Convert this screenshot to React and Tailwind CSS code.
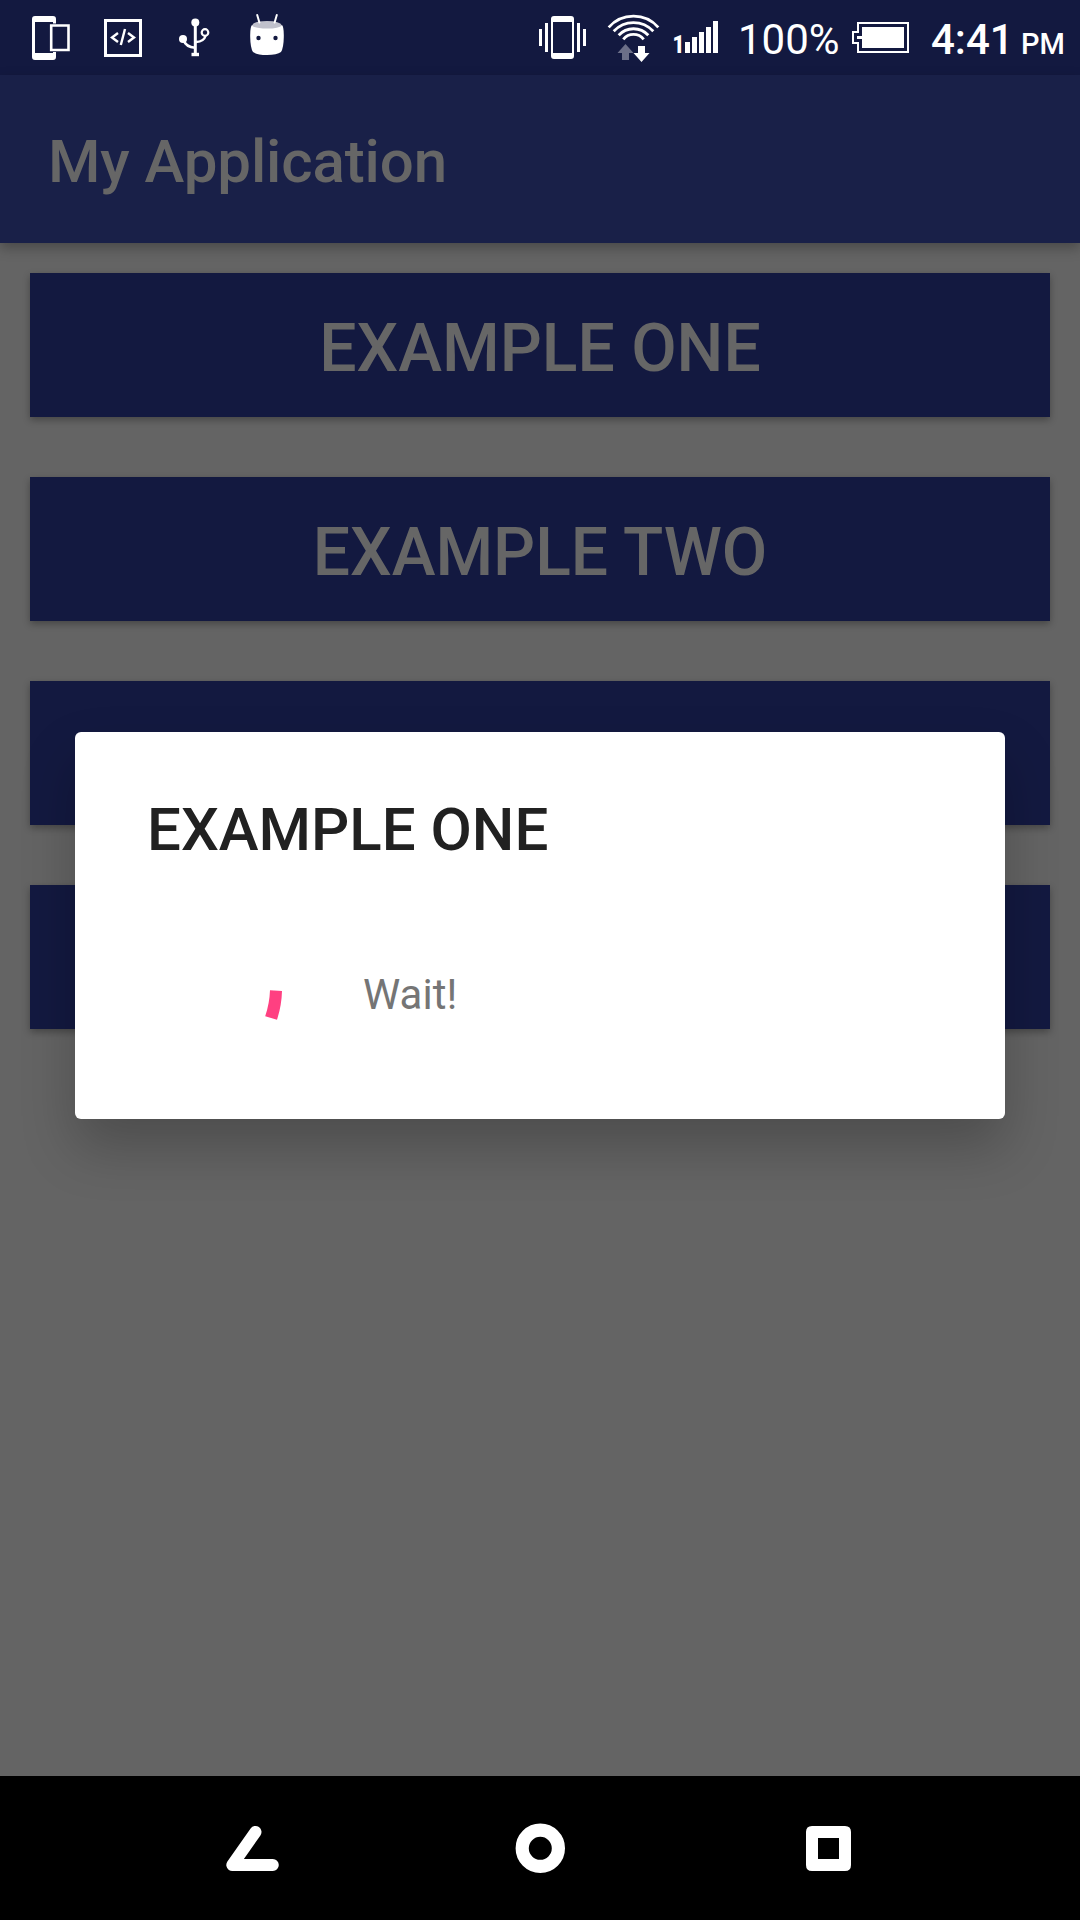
const EXAMPLES = ["Example One", "Example Two", "", ""];

function PhoneTabletIcon() {
  return (
    <svg className="ml-8 shrink-0" width="38" height="75" viewBox="32 0 38 75" fill="none">
      <path d="M35 16H53Q56 16 56 19V57Q56 60 53 60H35Q32 60 32 57V19Q32 16 35 16ZM35 22V53H53V22Z" fill="#fff" fillRule="evenodd" />
      <path d="M49 23.5H70V52H49Z" fill="#131940" />
      <path d="M51.2 25.5H68.5V50H51.2Z" stroke="#fff" strokeWidth="2.6" />
    </svg>
  );
}

function CodeIcon() {
  return (
    <svg className="ml-[34px] shrink-0" width="38" height="75" viewBox="104 0 38 75" fill="none" stroke="#fff">
      <rect x="105.5" y="20.5" width="35" height="35" strokeWidth="3" />
      <path d="M118 33L112 37.5L118 42M128 33L134 37.5L128 42" strokeWidth="2.4" />
      <path d="M125 29L120.800 45" strokeWidth="2.4" />
    </svg>
  );
}

function UsbIcon() {
  return (
    <svg className="ml-[37px] shrink-0" width="31" height="75" viewBox="179 0 31 75" fill="none" stroke="#fff">
      <path d="M195.300 22V54" strokeWidth="3" />
      <path d="M191.500 54.500H199" strokeWidth="3.400" />
      <path d="M183 39Q186 47.500 195 47.700M205.500 36Q204 41.500 196 42" strokeWidth="2.400" />
      <circle cx="195.300" cy="22.600" r="4" fill="#fff" stroke="none" />
      <circle cx="183" cy="39" r="4" fill="#fff" stroke="none" />
      <circle cx="205" cy="32.500" r="3.300" strokeWidth="2.2" />
    </svg>
  );
}

function AndroidIcon() {
  return (
    <svg className="ml-10 shrink-0" width="34" height="75" viewBox="250 0 34 75" fill="none">
      <path d="M252 25Q267 31 282 25Q284 27 283.800 37Q283.600 48 281 52Q277 55 267 55Q257 55 253 52Q250.400 48 250.200 37Q250 27 252 25Z" fill="#fff" />
      <path d="M252 25.500Q254 21 267 21Q280 21 282 25.500Q279 28.600 267 28.600Q255 28.600 252 25.500Z" fill="#c0c1cc" />
      <path d="M257.200 15L259.400 22.500M276.800 15L274.600 22.500" stroke="#fff" strokeWidth="2" strokeLinecap="round" />
      <circle cx="258.500" cy="38" r="2.200" fill="#131940" />
      <circle cx="275.500" cy="38" r="2.200" fill="#131940" />
    </svg>
  );
}

function VibrateIcon() {
  return (
    <svg className="ml-[255px] shrink-0" width="47" height="75" viewBox="539 0 47 75" fill="#fff">
      <path d="M554 16H571Q574 16 574 19V56Q574 59 571 59H554Q551 59 551 56V19Q551 16 554 16ZM553 22V53H572V22Z" fillRule="evenodd" />
      <path d="M545 23H548V52H545ZM539 29H542V46H539ZM577 23H580V52H577ZM583 29H586V46H583Z" />
    </svg>
  );
}

function WifiIcon() {
  return (
    <svg className="ml-[21px] shrink-0" width="53" height="75" viewBox="607 0 53 75" fill="none">
      <g stroke="#fff" strokeWidth="2.800">
        <path d="M608.700 27.300A33 33 0 0 1 658.300 27.300" />
        <path d="M613.700 31.300A27 27 0 0 1 653.300 31.300" />
        <path d="M618.700 35.300A20 20 0 0 1 648.300 35.300" />
        <path d="M623.300 39.300A13 13 0 0 1 643.700 39.300" />
      </g>
      <path d="M625.500 44L633.500 53H629V60H622V53H617.500Z" fill="#6c6f88" />
      <path d="M638 46H645V53H649.500L641.500 62L633.500 53H638Z" fill="#fff" />
    </svg>
  );
}

function SignalIcon() {
  return (
    <svg className="ml-3 shrink-0" width="46" height="75" viewBox="672 0 46 75" fill="#fff">
      <text x="672.500" y="53" fontFamily="Roboto" fontWeight="900" fontSize="26.500" textLength="12" lengthAdjust="spacingAndGlyphs">1</text>
      <path d="M685 42H690V53H685ZM692 37H697V53H692ZM699 32H704V53H699ZM706 27H711V53H706ZM713 21H718V53H713Z" />
    </svg>
  );
}

function BatteryIcon() {
  return (
    <svg className="ml-[13px] shrink-0" width="57" height="75" viewBox="852 0 57 75" fill="none">
      <path d="M858 23H908V52H858V43H853V32H858Z" stroke="#fff" strokeWidth="2" />
      <path d="M862 27H904V48H862V39H857V36H862Z" fill="#fff" />
    </svg>
  );
}

function StatusBar() {
  return (
    <div className="flex h-[75px] items-center bg-[#131940] whitespace-nowrap text-white">
      <PhoneTabletIcon />
      <CodeIcon />
      <UsbIcon />
      <AndroidIcon />
      <VibrateIcon />
      <WifiIcon />
      <SignalIcon />
      <div className="ml-5 w-[101px] pt-[5px] text-[42px] leading-none">100%</div>
      <BatteryIcon />
      <div className="ml-[22px] flex items-baseline pt-[5px] leading-none font-medium">
        <span className="w-[90px] text-[42px]">4:41</span>
        <span className="text-[29px]">PM</span>
      </div>
    </div>
  );
}

function ProgressDialog() {
  return (
    <div className="absolute top-[732px] left-[75px] flex h-[387px] w-[930px] flex-col rounded-md bg-white px-[72px] pt-[63px] shadow-[0_28px_54px_rgba(0,0,0,0.23)]">
      <h2 className="text-[60px] leading-[70px] font-medium text-[#212121]">EXAMPLE ONE</h2>
      <div className="mt-[58px] flex h-[144px] items-center">
        <svg className="shrink-0" width="144" height="144" viewBox="147 923 144 144">
          <path d="M270 990.300L282 991A100 100 0 0 1 277 1019.700L265.200 1016.200A90 90 0 0 0 270 990.300Z" fill="#ff4081" />
        </svg>
        <p className="ml-[72px] text-[42px] leading-[50px] text-[#757575]">Wait!</p>
      </div>
    </div>
  );
}

function NavigationBar() {
  return (
    <div className="flex h-36 items-center justify-center gap-[216px] bg-black">
      <svg width="72" height="72" viewBox="216 1812 72 72" fill="none">
        <path d="M255.500 1832L232.300 1865H272.800" stroke="#fff" strokeWidth="12" strokeLinecap="round" strokeLinejoin="round" />
      </svg>
      <svg width="72" height="72" viewBox="504 1812 72 72" fill="none">
        <circle cx="540.300" cy="1848.300" r="18.100" stroke="#fff" strokeWidth="13.200" />
      </svg>
      <svg width="72" height="72" viewBox="792 1812 72 72">
        <path d="M812 1826H845Q851 1826 851 1832V1865Q851 1871 845 1871H812Q806 1871 806 1865V1832Q806 1826 812 1826ZM818 1838V1859H839V1838Z" fill="#fff" fillRule="evenodd" />
      </svg>
    </div>
  );
}

export default function App() {
  return (
    <div className="relative flex h-[1920px] w-[1080px] flex-col overflow-hidden bg-[#646464] font-['Roboto',sans-serif]">
      <StatusBar />
      <header className="flex h-[168px] items-center bg-[#192048] px-12 pt-[5px] shadow-[0_5px_12px_rgba(0,0,0,0.28)]">
        <h1 className="text-[60px] leading-[70px] font-medium tracking-[-0.1px] text-[#666666]">My Application</h1>
      </header>
      <main className="flex flex-1 flex-col gap-[60px] p-[30px]">
        {EXAMPLES.map((label, index) => (
          <button
            key={index}
            className="flex h-36 items-center justify-center bg-[#131940] pt-[7px] text-[66px] leading-[78px] font-medium text-[#666666] uppercase shadow-[0_3px_7px_rgba(0,0,0,0.3)]"
          >
            {label}
          </button>
        ))}
      </main>
      <NavigationBar />
      <ProgressDialog />
    </div>
  );
}
